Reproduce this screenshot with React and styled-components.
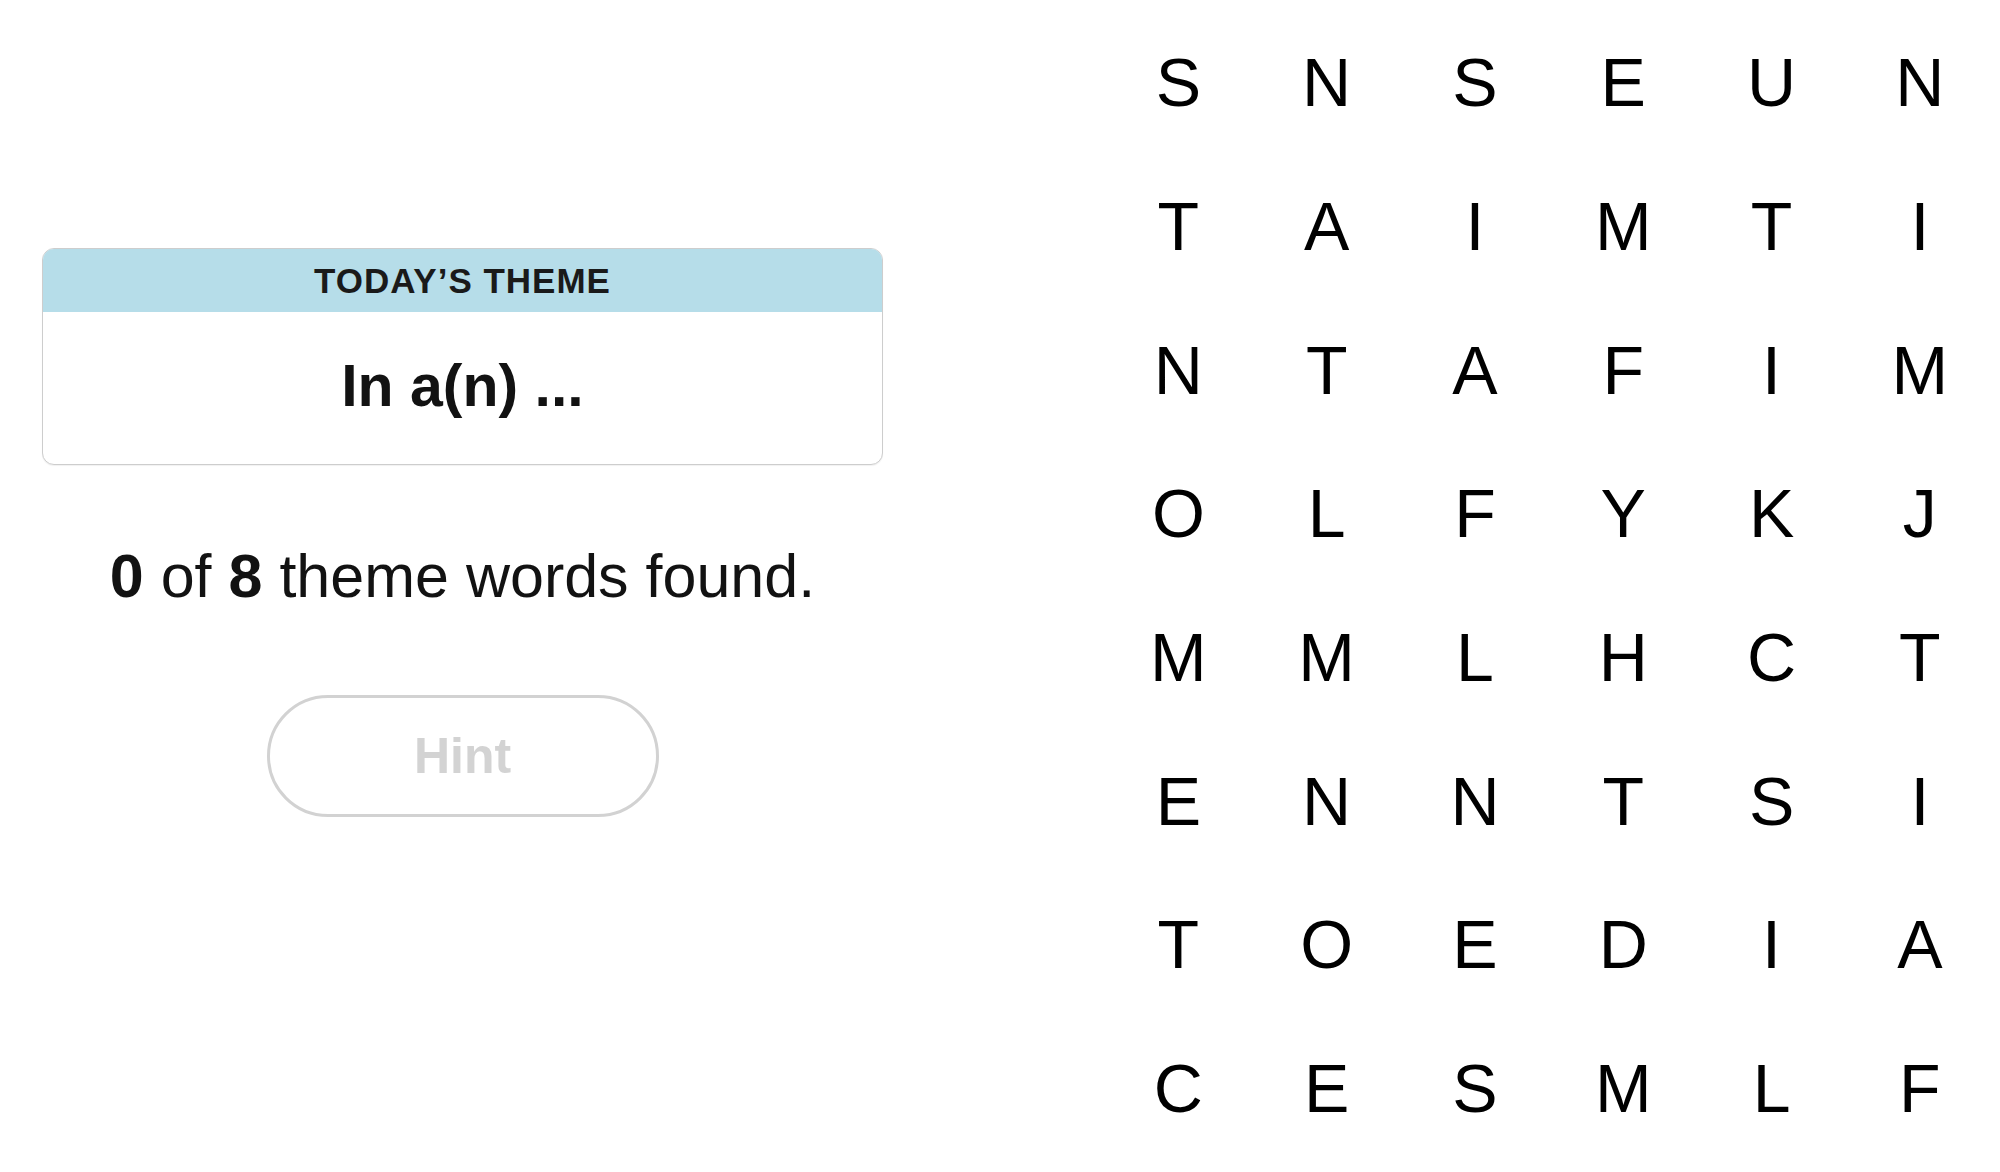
import styled, { createGlobalStyle } from "styled-components";

const GlobalStyle = createGlobalStyle`
  html, body {
    margin: 0;
    padding: 0;
    background: #ffffff;
  }
  body {
    font-family: "Liberation Sans", Arial, sans-serif;
    color: #121212;
  }
`;

const letters = [
  "SNSEUN",
  "TAIMTI",
  "NTAFIM",
  "OLFYKJ",
  "MMLHCT",
  "ENNTSI",
  "TOEDIA",
  "CESMLF",
];

const App = () => {
  return (
    <>
      <GlobalStyle />
      <Page>
        <Sidebar>
          <ThemeCard>
            <ThemeHeader>TODAY’S THEME</ThemeHeader>
            <ThemeBody>In a(n) ...</ThemeBody>
          </ThemeCard>

          <Progress>
            <b>0</b> of <b>8</b> theme words found.
          </Progress>

          <HintButton disabled>Hint</HintButton>
        </Sidebar>

        <Board>
          {letters.map((row, r) =>
            row.split("").map((ch, c) => (
              <Cell key={`${r}-${c}`}>{ch}</Cell>
            ))
          )}
        </Board>
      </Page>
    </>
  );
};

export default App;

const Page = styled.main`
  display: flex;
  justify-content: space-between;
  width: 2000px;
  height: 1172px;
  overflow: hidden;
`;

const Sidebar = styled.section`
  width: 841px;
  margin-left: 42px;
  padding-top: 248px;
  display: flex;
  flex-direction: column;
  align-items: center;
`;

const ThemeCard = styled.div`
  width: 100%;
  box-sizing: border-box;
  border: 1.5px solid #cdcdcd;
  border-radius: 12px;
  overflow: hidden;
  background: #fff;
  box-shadow: 0 1px 1px rgba(0, 0, 0, 0.06);
`;

const ThemeHeader = styled.div`
  height: 64px;
  margin: -1.5px -1.5px 0;
  background: #b6dde9;
  display: flex;
  align-items: center;
  justify-content: center;
  font-size: 35px;
  font-weight: 700;
  letter-spacing: 1px;
  color: #1a1a1a;
  padding-top: 2px;
  box-sizing: border-box;
`;

const ThemeBody = styled.div`
  height: 152px;
  display: flex;
  align-items: center;
  justify-content: center;
  font-size: 59px;
  font-weight: 700;
  color: #121212;
  padding-bottom: 4px;
  box-sizing: border-box;
`;

const Progress = styled.p`
  margin: 81px 0 0;
  font-size: 61px;
  line-height: 1;
  color: #121212;

  b {
    font-weight: 700;
  }
`;

const HintButton = styled.button`
  margin-top: 88px;
  width: 392px;
  height: 122px;
  border: 3px solid #d2d2d2;
  border-radius: 61px;
  background: #fff;
  font-family: "Liberation Sans", Arial, sans-serif;
  font-size: 50px;
  font-weight: 700;
  color: #d3d3d3;
  cursor: default;
`;

const Board = styled.section`
  margin-top: 10px;
  margin-right: 6px;
  display: grid;
  grid-template-columns: repeat(6, 148.3px);
  grid-template-rows: repeat(8, 143.7px);
  align-self: flex-start;
`;

const Cell = styled.span`
  display: flex;
  align-items: center;
  justify-content: center;
  font-size: 68px;
  font-weight: 400;
  color: #000;
  line-height: 1;
  padding-top: 1px;
`;
